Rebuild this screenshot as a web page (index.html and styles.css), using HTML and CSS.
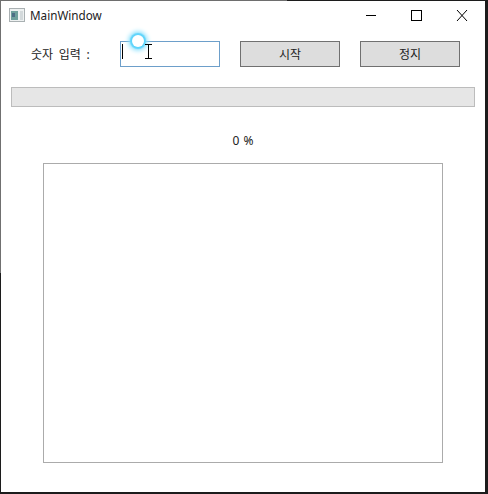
FILE: index.html
```html
<!DOCTYPE html>
<html lang="ko">
<head>
    <meta charset="UTF-8">
    <title>MainWindow</title>
    <link rel="stylesheet" href="styles.css">
</head>
<body>
    <div class="window">
        <div class="titlebar">
            <svg class="app-icon" width="16" height="14" viewBox="0 0 16 14">
                <rect x="0.5" y="0.5" width="15" height="13" fill="#eef1f1" stroke="#a9b0b2"/>
                <rect x="2" y="3" width="7" height="9" fill="#6f9f9c"/>
                <rect x="3" y="5" width="3" height="4" fill="#4d6d85"/>
                <rect x="11" y="3" width="3" height="9" fill="#d3d9db"/>
            </svg>
            <span class="title">MainWindow</span>
            <div class="controls">
                <svg width="46" height="30" viewBox="0 0 46 30"><path d="M19 14.5h10" stroke="#000" fill="none"/></svg>
                <svg width="46" height="30" viewBox="0 0 46 30"><rect x="18.5" y="9.500" width="10" height="10" stroke="#000" fill="none"/></svg>
                <svg width="46" height="30" viewBox="0 0 46 30"><path d="M18 9l10 11M28 9l-10 11" stroke="#000" fill="none"/></svg>
            </div>
        </div>

        <div class="content">
            <div class="input-row">
                <label class="num-label" for="num">숫자 입력 :</label>
                <div class="num-input" id="num"><span class="caret"></span></div>
                <button class="btn" type="button">시작</button>
                <button class="btn" type="button">정지</button>
            </div>
            <div class="progress"></div>
            <p class="percent">0 %</p>
            <div class="canvas-box"></div>
        </div>

        <!-- mouse highlight from the screen recorder -->
        <div class="cursor-ring"></div>
        <svg class="ibeam" width="9" height="15" viewBox="0 0 9 15">
            <path d="M1 .5h7M1 14.500h7M4.500 .5v14" stroke="#000" fill="none"/>
        </svg>
    </div>
</body>
</html>
```

FILE: styles.css
```css
* {
    margin: 0;
    padding: 0;
    box-sizing: border-box;
    font-family: "Noto Sans", "Noto Sans CJK KR", sans-serif;
}

body {
    background-color: #1c1c1c;
    width: 488px;
    height: 494px;
    overflow: hidden;
}

.window {
    position: relative;
    width: 485px;
    height: 492px;
    background-color: #ffffff;
    border-left: 1px solid #707070;
    border-top: 1px solid #6e6e6e;
    color: #000000;
}

/* the capture's edge goes dark past these points */
.window::before {
    content: "";
    position: absolute;
    left: 286px;
    right: 0;
    top: -1px;
    height: 1px;
    background-color: #1c1c1c;
}

.window::after {
    content: "";
    position: absolute;
    left: -1px;
    top: 272px;
    bottom: 0;
    width: 1px;
    background-color: #1c1c1c;
}

.titlebar {
    display: flex;
    align-items: center;
    height: 28px;
    padding-left: 8px;
}

.app-icon {
    margin-right: 5px;
}

.title {
    font-size: 11.7px;
    color: #222222;
}

.controls {
    display: flex;
    margin-left: auto;
    height: 30px;
    margin-top: 2px;
}

.controls svg {
    display: block;
}

.content {
    padding: 12px 0 0 10px;
}

.input-row {
    display: flex;
    align-items: center;
    height: 26px;
}

.num-label {
    width: 109px;
    padding-left: 20px;
    font-size: 12px;
    color: #222222;
    word-spacing: 2.5px;
}

.num-input {
    width: 100px;
    height: 26px;
    margin-right: 20px;
    padding: 2px 0 0 1px;
    border: 1px solid #6d9fca;
}

.caret {
    display: block;
    width: 1px;
    height: 15px;
    background-color: #000000;
}

.btn {
    width: 100px;
    height: 26px;
    margin-right: 20px;
    background-color: #dddddd;
    border: 1px solid #707070;
    font-size: 12px;
    color: #222222;
}

.progress {
    width: 464px;
    height: 20px;
    margin-top: 20px;
    background-color: #e6e6e6;
    border: 1px solid #bcbcbc;
}

.percent {
    width: 464px;
    margin-top: 25px;
    font-size: 12px;
    line-height: 17px;
    text-align: center;
    color: #222222;
    word-spacing: 1px;
}

.canvas-box {
    width: 400px;
    height: 300px;
    margin: 14px 0 0 32px;
    border: 1px solid #ababab;
}

.cursor-ring {
    position: absolute;
    left: 131px;
    top: 34px;
    width: 12px;
    height: 12px;
    border-radius: 50%;
    background-color: #ffffff;
    box-shadow: 0 0 1px 2px #5fd4fb, 0 0 4px 4px #98e4fd;
}

.ibeam {
    position: absolute;
    left: 143px;
    top: 43px;
}
```
